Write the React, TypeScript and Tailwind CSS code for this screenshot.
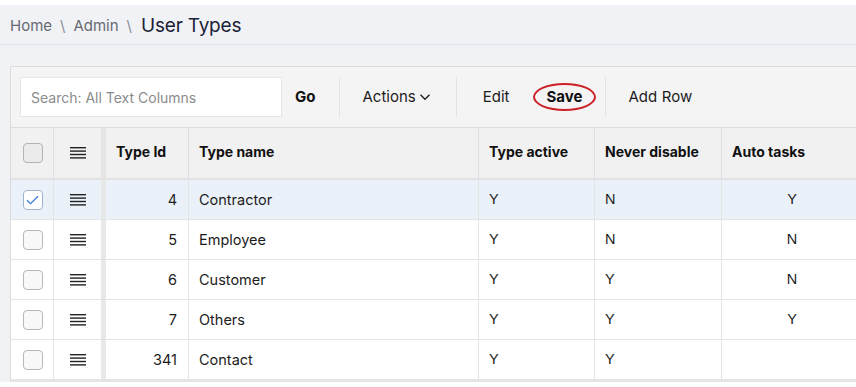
import React from "react";

const rows = [
  { id: 4, name: "Contractor", active: "Y", never: "N", auto: "Y", sel: true },
  { id: 5, name: "Employee", active: "Y", never: "N", auto: "N", sel: false },
  { id: 6, name: "Customer", active: "Y", never: "Y", auto: "N", sel: false },
  { id: 7, name: "Others", active: "Y", never: "Y", auto: "Y", sel: false },
  { id: 341, name: "Contact", active: "Y", never: "Y", auto: "", sel: false },
];

function Burger() {
  return (
    <svg width="16" height="12" viewBox="0 0 16 12" className="block">
      <rect x="0" y="0" width="16" height="1.4" fill="#222" />
      <rect x="0" y="3.4" width="16" height="1.4" fill="#222" />
      <rect x="0" y="6.8" width="16" height="1.4" fill="#222" />
      <rect x="0" y="10.2" width="16" height="1.4" fill="#222" />
    </svg>
  );
}

function Check({ checked, header }: { checked?: boolean; header?: boolean }) {
  return (
    <div
      className={
        "w-[20px] h-[20px] rounded-[4px] border flex items-center justify-center " +
        (checked
          ? "bg-white border-[#9fb4cc]"
          : header
          ? "bg-[#ebebeb] border-[#b3b3b3]"
          : "bg-[#f8f8f8] border-[#b8b8b8]")
      }
    >
      {checked && (
        <svg width="13" height="10" viewBox="0 0 13 10">
          <path d="M1 5.2 L4.6 8.6 L12 1.2" fill="none" stroke="#3b7dd8" strokeWidth="1.3" />
        </svg>
      )}
    </div>
  );
}

const yn = { fontFamily: "'Liberation Sans', sans-serif" };

export default function App() {
  return (
    <div
      className="w-[856px] h-[387px] overflow-hidden bg-white text-[#1c1c1c]"
      style={{ fontFamily: "Inter, 'Noto Sans', sans-serif" }}
    >
      <div className="h-[5px] bg-white" />
      <div className="bg-[#f1f2f6]">
        <div className="h-[40px] border-b border-[#dfe1e6] flex items-center pl-[10px] pt-[4px]">
          <span className="text-[15px] text-[#666a70]">Home</span>
          <span className="text-[15px] text-[#8a8d92] ml-[8px] mr-[8px]">\</span>
          <span className="text-[15px] text-[#666a70]">Admin</span>
          <span className="text-[15px] text-[#8a8d92] ml-[8px] mr-[9px]">\</span>
          <span className="text-[19px] text-[#1b2236] tracking-[-0.2px] mb-[1px]">User Types</span>
        </div>
        <div className="h-[21px]" />
        <div className="ml-[10px] bg-white border-l border-t border-[#dcdcdc]">
          {/* toolbar */}
          <div className="h-[61px] bg-[#f4f4f4] border-b border-[#dcdcdc] flex items-center pl-[9px]">
            <div className="w-[262px] h-[40px] bg-white border border-[#e6e6e6] flex items-center pl-[10px] text-[14px] text-[#8b8b8b]">
              Search: All Text Columns
            </div>
            <span className="ml-[13px] text-[15px] font-bold text-[#111]">Go</span>
            <div className="ml-[24px] w-px h-[40px] bg-[#e2e2e2]" />
            <span className="ml-[22px] text-[15px] text-[#1c1c1c] flex items-center">
              Actions
              <svg width="12" height="8" viewBox="0 0 12 8" className="ml-[3px]">
                <path d="M1.5 1.8 L6 6.2 L10.5 1.8" fill="none" stroke="#222" strokeWidth="1.4" />
              </svg>
            </span>
            <div className="ml-[25px] w-px h-[40px] bg-[#e2e2e2]" />
            <span className="ml-[26px] text-[15px] text-[#1c1c1c]">Edit</span>
            <span className="relative ml-[37px] text-[15px] font-bold text-[#111]">
              Save
              <span className="absolute left-[-13px] top-[-3px] w-[63px] h-[28px] rounded-[50%] border-2 border-[#cc2129]" />
            </span>
            <div className="ml-[23px] w-px h-[40px] bg-[#e2e2e2]" />
            <span className="ml-[22px] text-[15px] text-[#1c1c1c] tracking-[0.1px]">Add Row</span>
          </div>
          {/* header */}
          <div className="h-[50px] bg-[#f1f1f1] flex text-[14px] font-bold text-[#111]">
            <div className="w-[43px] shrink-0 border-r border-[#dedede] flex items-center justify-center pl-[1px]">
              <Check header />
            </div>
            <div className="w-[47px] shrink-0 flex items-center justify-center">
              <Burger />
            </div>
            <div className="w-[5px] shrink-0 bg-[#e4e4e4]" />
            <div className="w-[83px] shrink-0 border-r border-[#dedede] flex items-center pl-[10px] pb-[3px]">Type Id</div>
            <div className="w-[290px] shrink-0 border-r border-[#dedede] flex items-center pl-[10px] pb-[3px]">Type name</div>
            <div className="w-[116px] shrink-0 border-r border-[#dedede] flex items-center pl-[10px] pb-[3px]">Type active</div>
            <div className="w-[127px] shrink-0 border-r border-[#dedede] flex items-center pl-[10px] pb-[3px]">Never disable</div>
            <div className="flex-1 flex items-center pl-[10px] pb-[3px]">Auto tasks</div>
          </div>
          <div className="h-[2px] bg-[#e2e2e2] shadow-[0_2px_3px_rgba(0,0,0,0.08)]" />
          {/* rows */}
          {rows.map((r) => (
            <div
              key={r.id}
              className={
                "h-[40px] flex text-[14.5px] border-b border-[#e4e4e4] " +
                (r.sel ? "bg-[#eaf1f8]" : "bg-white")
              }
            >
              <div className="w-[43px] shrink-0 border-r border-[#e4e4e4] flex items-center justify-center pl-[1px]">
                <Check checked={r.sel} />
              </div>
              <div className="w-[47px] shrink-0 flex items-center justify-center">
                <Burger />
              </div>
              <div className="w-[5px] shrink-0 bg-[#e8e8e8]" />
              <div className="w-[83px] shrink-0 border-r border-[#e4e4e4] flex items-center justify-end pr-[11px]">
                {r.id}
              </div>
              <div className="w-[290px] shrink-0 border-r border-[#e4e4e4] flex items-center pl-[10px]">{r.name}</div>
              <div className="w-[116px] shrink-0 border-r border-[#e4e4e4] flex items-center pl-[10px]" style={yn}>{r.active}</div>
              <div className="w-[127px] shrink-0 border-r border-[#e4e4e4] flex items-center pl-[10px]" style={yn}>{r.never}</div>
              <div className="w-[140px] shrink-0 flex items-center justify-center" style={yn}>{r.auto}</div>
            </div>
          ))}
          <div className="h-[2px] bg-[#e4e4e4]" />
        </div>
      </div>
      <div className="bg-white h-[20px]" />
    </div>
  );
}
